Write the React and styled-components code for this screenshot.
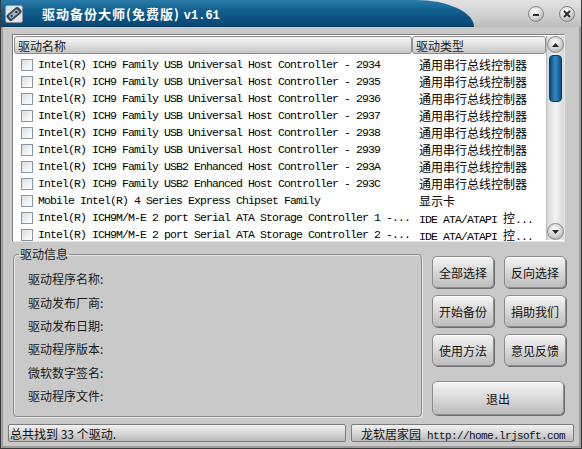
import styled, { createGlobalStyle } from "styled-components";

const GlobalStyle = createGlobalStyle`
  * { box-sizing: border-box; }
  body {
    margin: 0;
    background: #c9c9c9;
    font-family: "Noto Sans CJK SC", "Liberation Sans", sans-serif;
  }
`;

const drivers = [
  ["Intel(R) ICH9 Family USB Universal Host Controller - 2934", "通用串行总线控制器"],
  ["Intel(R) ICH9 Family USB Universal Host Controller - 2935", "通用串行总线控制器"],
  ["Intel(R) ICH9 Family USB Universal Host Controller - 2936", "通用串行总线控制器"],
  ["Intel(R) ICH9 Family USB Universal Host Controller - 2937", "通用串行总线控制器"],
  ["Intel(R) ICH9 Family USB Universal Host Controller - 2938", "通用串行总线控制器"],
  ["Intel(R) ICH9 Family USB Universal Host Controller - 2939", "通用串行总线控制器"],
  ["Intel(R) ICH9 Family USB2 Enhanced Host Controller - 293A", "通用串行总线控制器"],
  ["Intel(R) ICH9 Family USB2 Enhanced Host Controller - 293C", "通用串行总线控制器"],
  ["Mobile Intel(R) 4 Series Express Chipset Family", "显示卡"],
  ["Intel(R) ICH9M/M-E 2 port Serial ATA Storage Controller 1 -...", "IDE ATA/ATAPI 控..."],
  ["Intel(R) ICH9M/M-E 2 port Serial ATA Storage Controller 2 -...", "IDE ATA/ATAPI 控..."],
];

const infoLabels = [
  "驱动程序名称:",
  "驱动发布厂商:",
  "驱动发布日期:",
  "驱动程序版本:",
  "微软数字签名:",
  "驱动程序文件:",
];

const buttons = ["全部选择", "反向选择", "开始备份", "捐助我们", "使用方法", "意见反馈"];

// splits a string into mono ascii runs and CJK runs
function Mixed({ text }) {
  return (
    <span>
      {text.split(/([\u4e00-\u9fff]+)/).map((part, i) =>
        /[\u4e00-\u9fff]/.test(part) ? <Han key={i}>{part}</Han> : <span key={i}>{part}</span>
      )}
    </span>
  );
}

function AppIcon() {
  return (
    <svg width="18" height="18" viewBox="0 0 18 18">
      <rect x="0.5" y="0.5" width="17" height="17" rx="2" fill="#dfe4e8" stroke="#8a96a0" />
      <g transform="rotate(-40 9 9)">
        <rect x="1.5" y="5.5" width="15" height="7" rx="2" fill="#3d4a55" stroke="#1e262c" strokeWidth="0.6" />
        <rect x="3.5" y="7" width="11" height="4" rx="1" fill="#9fb7c9" />
        <circle cx="6" cy="9" r="1.2" fill="#2c3a46" />
        <circle cx="12" cy="9" r="1.2" fill="#2c3a46" />
      </g>
    </svg>
  );
}

function Arrow({ up }) {
  return (
    <svg width="7" height="4" viewBox="0 0 7 4">
      <path d={up ? "M0 4 L3.5 0 L7 4 Z" : "M0 0 L3.5 4 L7 0 Z"} fill="#2a2a2a" />
    </svg>
  );
}

export default function App() {
  return (
    <>
      <GlobalStyle />
      <Window>
        <TitleBar>
          <TitleTab>
            <AppIcon />
            <TitleText>
              驱动备份大师(免费版) <Ver>v1.61</Ver>
            </TitleText>
          </TitleTab>
          <TitleRight>
            <RoundBtn>
              <svg width="8" height="8" viewBox="0 0 8 8">
                <rect x="1" y="4" width="6" height="2" fill="#2d2d2d" />
              </svg>
            </RoundBtn>
            <RoundBtn>
              <svg width="8" height="8" viewBox="0 0 8 8">
                <path d="M1 1 L7 7 M7 1 L1 7" stroke="#2d2d2d" strokeWidth="2" />
              </svg>
            </RoundBtn>
          </TitleRight>
        </TitleBar>

        <Main>
          <ListFrame>
            <ListBody>
              <HeaderRow>
                <HeaderCell $w={398}>驱动名称</HeaderCell>
                <HeaderCell>驱动类型</HeaderCell>
              </HeaderRow>
              <Rows>
                {drivers.map(([name, type]) => (
                  <Row key={name}>
                    <NameCell>
                      <Check />
                      <span>{name}</span>
                    </NameCell>
                    <TypeCell>
                      <Mixed text={type} />
                    </TypeCell>
                  </Row>
                ))}
              </Rows>
            </ListBody>
            <ScrollBar>
              <ScrollBtn>
                <Arrow up />
              </ScrollBtn>
              <Thumb />
              <ScrollSpace />
              <ScrollBtn>
                <Arrow />
              </ScrollBtn>
            </ScrollBar>
          </ListFrame>
        </Main>

        <Bottom>
          <GroupBox>
            <Legend>驱动信息</Legend>
            {infoLabels.map((l) => (
              <InfoRow key={l}>{l}</InfoRow>
            ))}
          </GroupBox>
          <ButtonGrid>
            {buttons.map((b) => (
              <Btn key={b}>{b}</Btn>
            ))}
            <ExitBtn>退出</ExitBtn>
          </ButtonGrid>
        </Bottom>

        <StatusBar>
          <StatusPanel $w={338}>总共找到 33 个驱动.</StatusPanel>
          <StatusPanel $mono>
            <Mixed text="龙软居家园 http://home.lrjsoft.com" />
          </StatusPanel>
        </StatusBar>
      </Window>
    </>
  );
}

const Window = styled.div`
  width: 582px;
  height: 449px;
  display: flex;
  flex-direction: column;
  background: #c9c9c9;
  border: 1px solid #3a3a3a;
  border-top: none;
  box-shadow: inset 2px 0 0 #9d9d9d, inset -2px 0 0 #9d9d9d, inset 0 -2px 0 #9d9d9d;
  overflow: hidden;
`;

const TitleBar = styled.div`
  height: 27px;
  display: flex;
  background: linear-gradient(#e2e2e2, #cfcfcf 60%, #bcbcbc);
  margin: 0 -1px;
`;

const TitleTab = styled.div`
  width: 474px;
  display: flex;
  align-items: center;
  gap: 19px;
  padding-left: 5px;
  background: linear-gradient(#2b7cab, #13618f 35%, #0b5080 75%, #0a4670);
  border-top-right-radius: 58px 27px;
  box-shadow: inset 0 -1px 0 #083a5c;
`;

const TitleText = styled.div`
  color: #fff;
  font-size: 13px;
  font-weight: 700;
  letter-spacing: 1px;
  white-space: nowrap;
  margin-top: -1px;
`;

const Ver = styled.span`
  font-family: "Liberation Mono", monospace;
  font-size: 12px;
  letter-spacing: 0;
`;

const TitleRight = styled.div`
  flex: 1;
  display: flex;
  justify-content: flex-end;
  align-items: center;
  gap: 15px;
  padding-right: 7px;
`;

const RoundBtn = styled.div`
  width: 16px;
  height: 16px;
  border-radius: 50%;
  display: flex;
  align-items: center;
  justify-content: center;
  background: radial-gradient(circle at 40% 30%, #ffffff, #d4d4d4 55%, #9a9a9a);
  border: 1px solid #858585;
`;

const Main = styled.div`
  padding: 7px 16px 0 11px;
`;

const ListFrame = styled.div`
  height: 208px;
  display: flex;
  background: #fff;
  border: 1px solid #7f7f7f;
  border-right-color: #e6e6e6;
  border-bottom-color: #e6e6e6;
  padding: 1px 0 1px 1px;
  overflow: hidden;
`;

const ListBody = styled.div`
  flex: 1;
  display: flex;
  flex-direction: column;
  min-width: 0;
`;

const HeaderRow = styled.div`
  height: 18px;
  display: flex;
  flex-shrink: 0;
  margin-bottom: 2px;
`;

const HeaderCell = styled.div`
  ${(p) => (p.$w ? `width: ${p.$w}px;` : "flex: 1;")}
  display: flex;
  align-items: center;
  padding-left: 3px;
  font-size: 12px;
  color: #1a1a1a;
  background: linear-gradient(#f6f6f6, #dedede 55%, #c6c6c6);
  border: 1px solid #8e8e8e;
  border-radius: 3px;
`;

const Rows = styled.div`
  display: flex;
  flex-direction: column;
`;

const Row = styled.div`
  height: 17px;
  display: flex;
  align-items: center;
  flex-shrink: 0;
  font-family: "Liberation Mono", monospace;
  font-size: 11.5px;
  letter-spacing: -0.9px;
  color: #000;
  white-space: nowrap;
`;

const NameCell = styled.div`
  width: 398px;
  display: flex;
  align-items: center;
  gap: 5px;
  padding-left: 7px;
  overflow: hidden;
`;

const Check = styled.span`
  width: 12px;
  height: 12px;
  flex-shrink: 0;
  border: 1px solid #8796a4;
  background: linear-gradient(135deg, #d9dde0, #f6f7f8 70%, #fff);
`;

const TypeCell = styled.div`
  padding-left: 7px;
`;

const Han = styled.span`
  font-family: "Noto Sans CJK SC", sans-serif;
  font-size: 12px;
  letter-spacing: 0;
`;

const ScrollBar = styled.div`
  width: 18px;
  display: flex;
  flex-direction: column;
  background: linear-gradient(90deg, #d8d8d8, #f2f2f2 50%, #d8d8d8);
  border-left: 1px solid #bdbdbd;
`;

const ScrollBtn = styled.div`
  height: 17px;
  flex-shrink: 0;
  display: flex;
  align-items: center;
  justify-content: center;
  border-radius: 50%;
  background: radial-gradient(circle at 45% 35%, #ffffff, #d0d0d0 55%, #9c9c9c);
  border: 1px solid #8a8a8a;
`;

const Thumb = styled.div`
  height: 47px;
  margin: 2px 2px 0;
  border-radius: 4px;
  background: linear-gradient(90deg, #0b4a75, #2f88c2 45%, #2a7fb6 60%, #0c4d7a);
  border: 1px solid #0a3d60;
`;

const ScrollSpace = styled.div`
  flex: 1;
`;

const Bottom = styled.div`
  height: 177px;
  display: flex;
  gap: 10px;
  padding: 4px 0 0 12px;
`;

const GroupBox = styled.fieldset`
  width: 409px;
  height: 171px;
  margin: 0;
  padding: 5px 10px 0 14px;
  min-width: 0;
  border: 1px solid #8e8e8e;
  border-radius: 4px;
  box-shadow: 1px 1px 0 #e4e4e4, inset 1px 1px 0 #e4e4e4;
`;

const Legend = styled.legend`
  font-size: 12px;
  color: #1a1a1a;
  padding: 0 1px;
  margin-left: -9px;
  line-height: 16px;
`;

const InfoRow = styled.div`
  height: 23.4px;
  display: flex;
  align-items: center;
  font-size: 12px;
  color: #1a1a1a;
`;

const ButtonGrid = styled.div`
  display: grid;
  grid-template-columns: 62px 62px;
  grid-auto-rows: 32px;
  column-gap: 10px;
  row-gap: 7px;
  padding-top: 10px;
  align-content: start;
`;

const Btn = styled.div`
  display: flex;
  align-items: center;
  justify-content: center;
  font-size: 12px;
  color: #111;
  background: linear-gradient(#f4f4f4, #dcdcdc 45%, #bdbdbd);
  border: 1px solid #8c8c8c;
  border-radius: 5px;
  box-shadow: 1px 1px 0 #6f6f6f, inset 0 1px 0 #fff;
`;

const ExitBtn = styled(Btn)`
  grid-column: span 2;
  height: 34px;
  width: 132px;
  margin-top: 8px;
`;

const StatusBar = styled.div`
  height: 18px;
  display: flex;
  gap: 5px;
  padding: 0 7px;
  margin-top: 5px;
`;

const StatusPanel = styled.div`
  ${(p) => (p.$w ? `width: ${p.$w}px;` : "flex: 1;")}
  display: flex;
  align-items: center;
  padding-left: ${(p) => (p.$mono ? "9px" : "1px")};
  font-size: 12px;
  color: #111;
  white-space: nowrap;
  ${(p) => p.$mono && `font-family: "Liberation Mono", monospace; font-size: 11px; letter-spacing: -0.6px;`}
  background: linear-gradient(#f2f2f2, #d8d8d8 50%, #b9b9b9);
  border: 1px solid #7c7c7c;
  border-radius: 2px;
`;
